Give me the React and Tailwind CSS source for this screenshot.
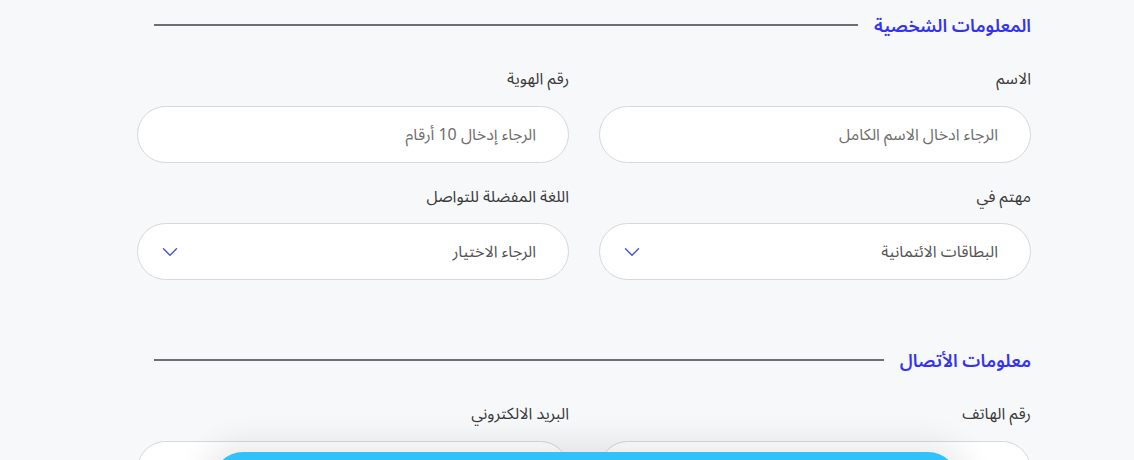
import React from 'react';
import { ChevronDown } from 'lucide-react';

const font = { fontFamily: '"Noto Sans Arabic", "Noto Sans", "DejaVu Sans", sans-serif' };

const SectionTitle = ({ title }) => (
  <div className="flex items-center gap-4 h-[28px]">
    <h2 className="text-[18px] font-semibold text-[#3434f0] leading-[28px] whitespace-nowrap">{title}</h2>
    <div className="flex-1 h-[1.5px] bg-[#6f6f73] ml-[17px] mb-[2px]" />
  </div>
);

const Field = ({ label, placeholder }) => (
  <div className="flex flex-col">
    <label className="text-[16px] leading-[24px] text-[#3a3a3a] font-normal mb-[15px]">{label}</label>
    <div className="h-[57px] rounded-full border border-[#d6d8dc] bg-white flex items-center pr-[32px] pl-[26px]">
      <span className="text-[16px] text-[#6e6e6e]">{placeholder}</span>
    </div>
  </div>
);

const SelectField = ({ label, value }) => (
  <div className="flex flex-col">
    <label className="text-[16px] leading-[24px] text-[#3a3a3a] font-normal mb-[14px]">{label}</label>
    <div className="h-[57px] rounded-full border border-[#d6d8dc] bg-white flex items-center justify-between pr-[32px] pl-[19px]">
      <span className="text-[16px] text-[#555]">{value}</span>
      <ChevronDown size={26} strokeWidth={1.3} color="#4454d6" />
    </div>
  </div>
);

export default function App() {
  return (
    <div dir="rtl" style={font} className="relative h-[460px] overflow-hidden bg-[#f7f8fa]">
      <div className="pr-[103px] pl-[137px] pt-[12px]">
        <SectionTitle title="المعلومات الشخصية" />
        <div className="grid grid-cols-2 gap-x-[30px] gap-y-[22px] mt-[27px]">
          <Field label="الاسم" placeholder="الرجاء ادخال الاسم الكامل" />
          <Field label="رقم الهوية" placeholder="الرجاء إدخال 10 أرقام" />
          <SelectField label="مهتم في" value="البطاقات الائتمانية" />
          <SelectField label="اللغة المفضلة للتواصل" value="الرجاء الاختيار" />
        </div>

        <div className="mt-[67px]">
          <SectionTitle title="معلومات الأتصال" />
        </div>
        <div className="grid grid-cols-2 gap-x-[30px] mt-[27px]">
          <Field label="رقم الهاتف" placeholder="" />
          <Field label="البريد الالكتروني" placeholder="" />
        </div>
      </div>

      <div className="absolute left-[213px] top-[452px] w-[745px] h-[60px] rounded-t-[30px] bg-[#31c2fb] shadow-[0_0_30px_12px_rgba(0,0,0,0.08)]" />
    </div>
  );
}
